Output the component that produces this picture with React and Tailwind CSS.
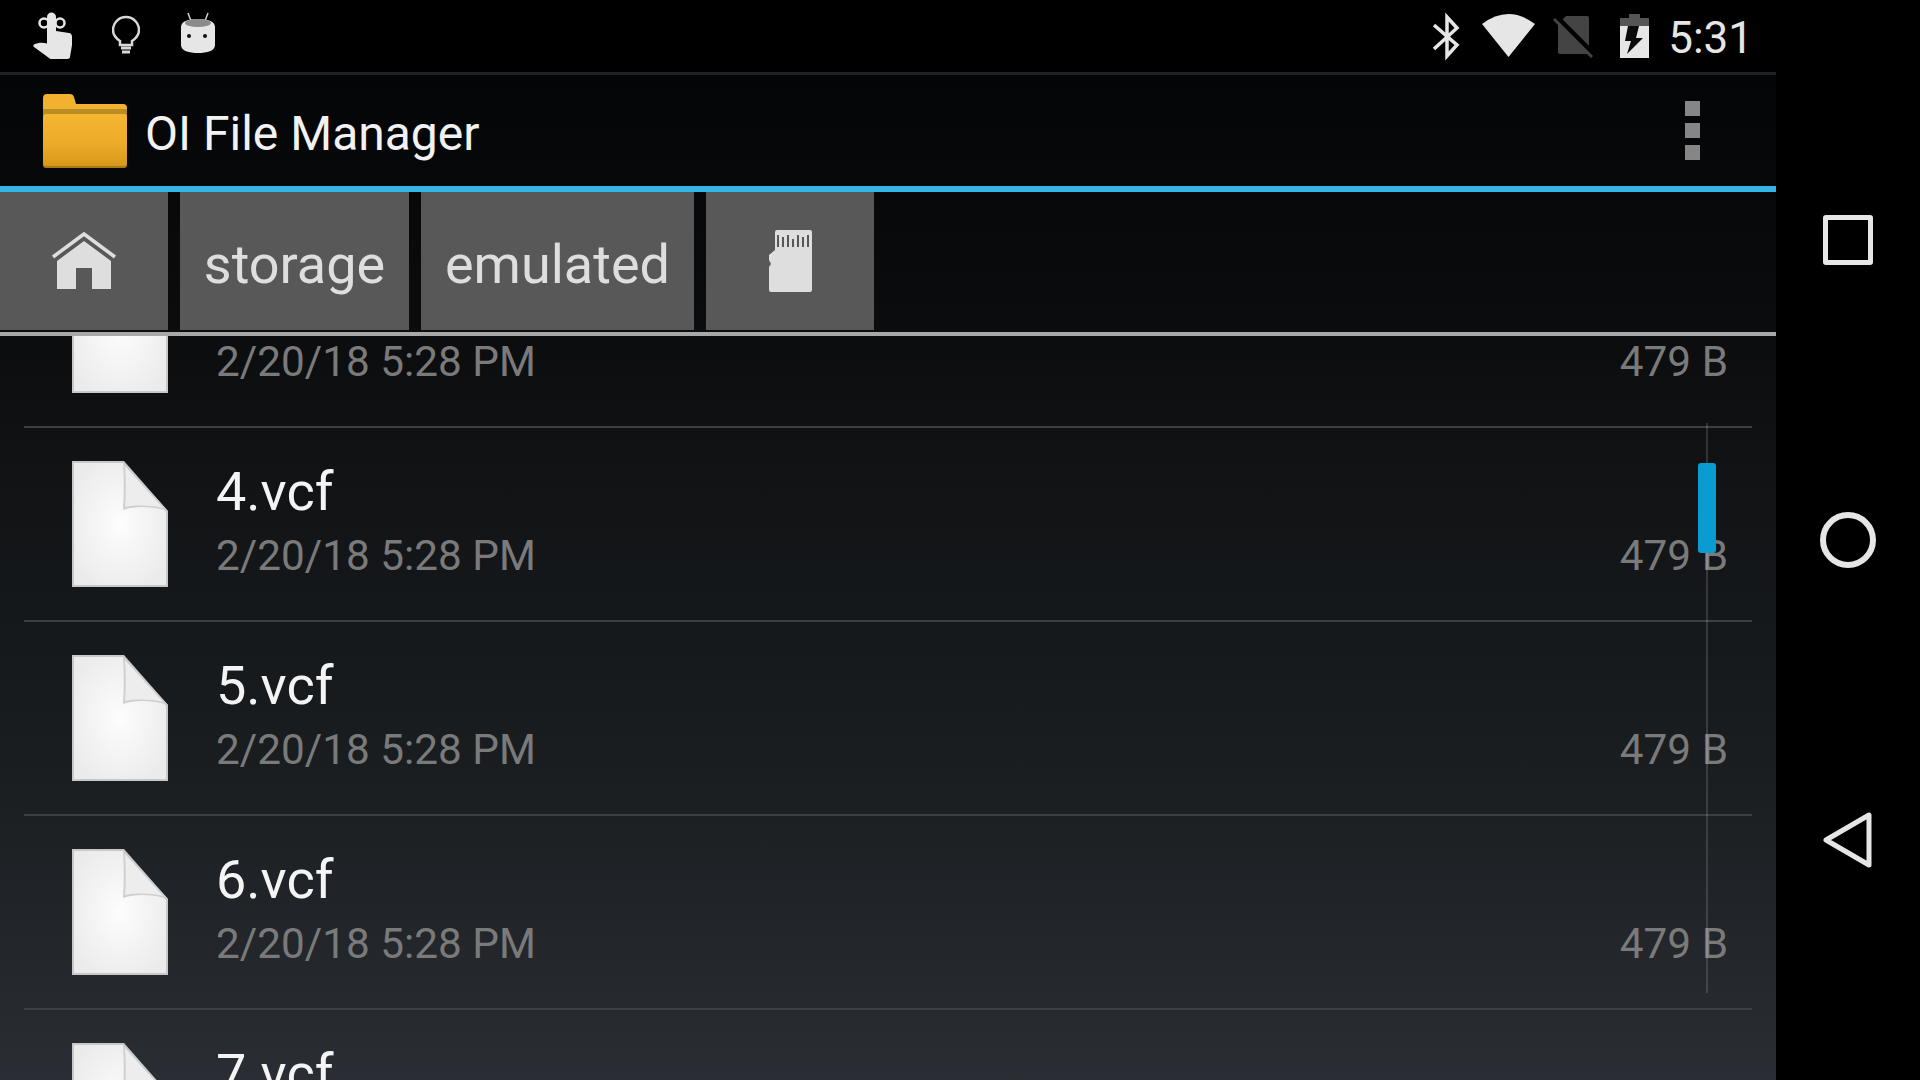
const FILES = ["3.vcf", "4.vcf", "5.vcf", "6.vcf", "7.vcf"];

function StatusIcons() {
  return (
    <div className="flex h-[72px] shrink-0 items-center bg-black pl-[33px] pr-[23px]">
      {/* touch hand */}
      <svg className="h-[72px] w-[40px]" viewBox="33 0 40 72" fill="#e6e6e6">
        <circle cx="44" cy="23" r="4.5" fill="none" stroke="#e6e6e6" strokeWidth="2.5" />
        <circle cx="60" cy="23" r="4.5" fill="none" stroke="#e6e6e6" strokeWidth="2.5" />
        <path d="M47 17c0-6 9-6 9 0v14l13 2c2 0 3 2 3 4v8l-2 12c0 1-1 2-3 2H52c-1 0-2 0-3-1L34 47c-1-1-1-2 0-2.500 4-2 9-2 13-1z" />
      </svg>
      {/* bulb */}
      <svg className="ml-[39px] h-[72px] w-[28px]" viewBox="112 0 28 72" fill="none" stroke="#d8d8d8" strokeWidth="2.500">
        <path d="M120 45v-4c-3-2-7-5-7-11a13 13 0 0 1 26 0c0 6-4 9-7 11v4z" />
        <path d="M121 48h10M122 52h8" strokeWidth="3" />
      </svg>
      {/* android head */}
      <svg className="ml-[41px] h-[72px] w-[34px]" viewBox="181 0 34 72">
        <path d="M188 13l3 8M208 13l-3 8" stroke="#d0d0d0" strokeWidth="1.500" />
        <path d="M181 27c0-6 8-8 17-8s17 2 17 8v18c0 6-8 8-17 8s-17-2-17-8z" fill="#e6e6e6" />
        <ellipse cx="198" cy="23" rx="13" ry="4" fill="#8a8a8a" />
        <circle cx="189" cy="36" r="2" fill="#111" />
        <circle cx="205" cy="36" r="2" fill="#111" />
      </svg>

      <div className="ml-auto flex items-center">
        {/* bluetooth */}
        <svg className="h-[72px] w-[27px]" viewBox="1432 0 27 72" fill="none" stroke="#e6e6e6" strokeWidth="3.500">
          <path d="M1433 49l23-21-10-11v39l10-11-23-20" />
        </svg>
        {/* wifi */}
        <svg className="ml-[22px] h-[72px] w-[53px]" viewBox="1481 0 53 72" fill="#e6e6e6">
          <path d="M1481 24Q1507.500 4 1534 24L1507.500 57z" />
        </svg>
        {/* no sim */}
        <svg className="ml-[18px] h-[72px] w-[40px]" viewBox="1552 0 40 72">
          <path d="M1557 24v28q0 2 2 2h27q2 0 2-2V18q0-2-2-2h-21z" fill="#444" />
          <path d="M1555 17l38 38" stroke="#000" strokeWidth="6" />
          <path d="M1553 19l38 38" stroke="#444" strokeWidth="3" />
        </svg>
        {/* battery charging */}
        <svg className="ml-[27px] h-[72px] w-[29px]" viewBox="1619 0 29 72">
          <path d="M1628 14h11v4h9v8h-29v-8h9z" fill="#555" />
          <rect x="1619" y="26" width="29" height="32" fill="#e6e6e6" />
          <path d="M1627 26h11l-3 12h7l-16 16 4-13h-6z" fill="#0a0a0a" />
        </svg>
        <span className="ml-[19px] pt-[3px] text-[44px] leading-[72px] text-[#e6e6e6]">5:31</span>
      </div>
    </div>
  );
}

function FolderIcon() {
  return (
    <svg className="h-[74px] w-[84px]" viewBox="43 95 84 74">
      <defs>
        <linearGradient id="folderFront" x1="0" y1="0" x2="0" y2="1">
          <stop offset="0" stopColor="#f5b632" />
          <stop offset="0.6" stopColor="#ebab28" />
          <stop offset="1" stopColor="#d8981a" />
        </linearGradient>
      </defs>
      <path d="M43 99q0-4 4-4h23q3 0 4 3l2 7h47q4 0 4 4v10H43z" fill="#f2b230" />
      <rect x="43" y="110" width="84" height="6" fill="#b98c24" />
      <rect x="43" y="115" width="84" height="54" rx="3" fill="#a87a14" />
      <rect x="43" y="115" width="84" height="52" rx="3" fill="url(#folderFront)" />
    </svg>
  );
}

function FileIcon() {
  return (
    <svg className="h-[126px] w-[96px] shrink-0" viewBox="0 0 96 126">
      <defs>
        <radialGradient id="filePaper" cx="0.5" cy="0.5" r="0.6">
          <stop offset="0" stopColor="#fdfdfd" />
          <stop offset="1" stopColor="#ebebeb" />
        </radialGradient>
      </defs>
      <path d="M0 0h52l44 50v76H0z" fill="#c8c8c8" />
      <path d="M2 2h49l43 49v73H2z" fill="url(#filePaper)" />
      <path d="M51 1l45 49c-14-4-30-6-45-1 1-16 1-32 0-48z" fill="#cfcfcf" />
      <path d="M53 5l38 42c-13-3-26-3-38-1 1-13 1-27 0-41z" fill="#ededed" />
    </svg>
  );
}

function FileRow({ name }) {
  return (
    <div className="mx-[24px] flex h-[194px] shrink-0 items-center border-b-2 border-[#3c3f43] pb-[1px] pl-[48px] pr-[24px]">
      <FileIcon />
      <div className="ml-[48px] flex-1 pb-[4px]">
        <div className="mb-[4px] text-[54px] leading-[64px] text-[#f4f4f4]">{name}</div>
        <div className="flex items-center justify-between text-[42.3px] leading-[56px] text-[#7a7a7a]">
          <span>2/20/18 5:28 PM</span>
          <span>479 B</span>
        </div>
      </div>
    </div>
  );
}

export default function App() {
  return (
    <div className="flex h-[1080px] w-[1920px] overflow-hidden bg-black font-['Roboto',sans-serif]">
      <div className="flex w-[1776px] shrink-0 flex-col">
        <StatusIcons />

        <div className="flex min-h-0 flex-1 flex-col bg-[linear-gradient(180deg,#040506_0%,#0a0c0e_25%,#111315_40%,#1a1e21_70%,#2a2e34_100%)]">
          {/* action bar */}
          <div className="h-[3px] shrink-0 bg-[#222222]" />
          <div className="flex h-[111px] shrink-0 items-center pl-[43px] pr-[76px]">
            <FolderIcon />
            <span className="ml-[18px] pt-[7px] text-[48px] text-[#f2f2f2]">OI File Manager</span>
            <div className="ml-auto flex flex-col gap-[7px]">
              <div className="h-[15px] w-[15px] bg-[#868686]" />
              <div className="h-[15px] w-[15px] bg-[#868686]" />
              <div className="h-[15px] w-[15px] bg-[#868686]" />
            </div>
          </div>
          <div className="h-[6px] shrink-0 bg-[#33b5e5]" />

          {/* breadcrumb */}
          <div className="flex h-[138px] shrink-0 gap-[12px]">
            <div className="flex w-[168px] items-center justify-center bg-[#585858]">
              <svg className="h-[60px] w-[66px]" viewBox="51 233 66 60" fill="#dedede">
                <path d="M53 259l31-23 31 23" fill="none" stroke="#dedede" strokeWidth="3.500" />
                <path d="M84 243l27 20v28H92v-21H76v21H57v-28z" />
              </svg>
            </div>
            <div className="flex w-[229px] items-center justify-center bg-[#585858] pt-[6px] text-[54px] text-[#dedede]">storage</div>
            <div className="flex w-[273px] items-center justify-center bg-[#585858] pt-[6px] text-[54px] text-[#dedede]">emulated</div>
            <div className="flex w-[168px] items-center justify-center bg-[#585858] pl-[2px]">
              <svg className="h-[64px] w-[44px]" viewBox="769 230 44 64">
                <path d="M777 231h33q2 0 2 2v58q0 2-2 2h-39q-2 0-2-2v-23l2-3-2-4v-5l6-5v-18q0-2 2-2z" fill="#dedede" />
                <path d="M778 236v12M783 238v10M788 236v12M793 240v8M798 236v12M803 238v10M808 236v12" stroke="#585858" strokeWidth="2" />
              </svg>
            </div>
          </div>
          <div className="mt-[2px] h-[4px] shrink-0 bg-[#a8a8a8]" />

          {/* file list, scrolled part way through the first row */}
          <div className="relative min-h-0 flex-1 overflow-hidden">
            <div className="-mt-[102px] flex flex-col">
              {FILES.map((f) => (
                <FileRow key={f} name={f} />
              ))}
            </div>
            <div className="absolute left-[1706px] top-[87px] h-[570px] w-[2px] bg-[#ffffff24]" />
            <div className="absolute left-[1698px] top-[127px] h-[90px] w-[18px] rounded-[3px] bg-[#0a9bd0]" />
          </div>
        </div>
      </div>

      {/* nav bar */}
      <div className="flex flex-1 flex-col items-center justify-center">
        <div className="flex h-[300px] items-center">
          <div className="h-[50px] w-[50px] rounded-[3px] border-[5px] border-[#e6e6e6]" />
        </div>
        <div className="flex h-[300px] items-center">
          <div className="h-[56px] w-[56px] rounded-full border-[6px] border-[#e6e6e6]" />
        </div>
        <div className="flex h-[300px] items-center">
          <svg className="h-[56px] w-[50px]" viewBox="0 0 50 56">
            <path d="M3 28L46 3v50z" fill="none" stroke="#e6e6e6" strokeWidth="5" strokeLinejoin="round" />
          </svg>
        </div>
      </div>
    </div>
  );
}
